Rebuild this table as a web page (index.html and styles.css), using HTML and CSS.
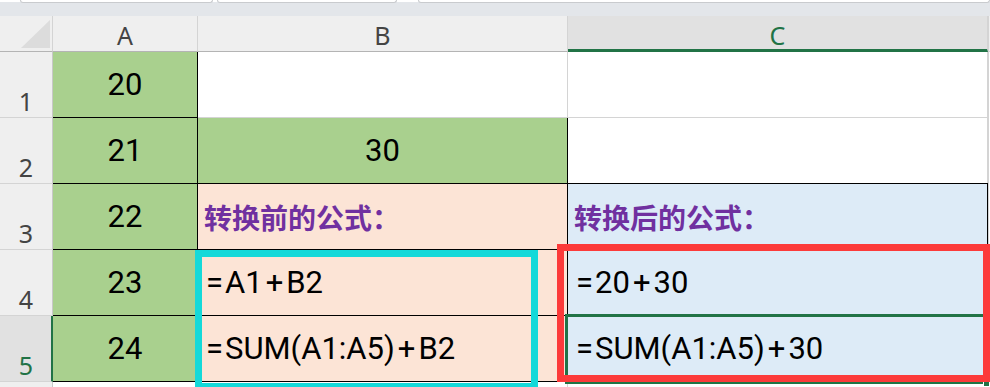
FILE: index.html
```html
<!DOCTYPE html>
<html lang="zh">
<head>
<meta charset="utf-8">
<title>Sheet</title>
<link rel="stylesheet" href="styles.css">
</head>
<body>
<div class="topbar">
  <div class="tab tab1"></div>
  <div class="tab tab2"></div>
  <div class="tab tab3"></div>
</div>
<div class="sheet">
  <div class="corner"><div class="tri"></div></div>
  <div class="colhead">A</div>
  <div class="colhead">B</div>
  <div class="colhead sel">C</div>
  <div class="edge head"></div>

  <div class="rowhead">1</div>
  <div class="cell green bl">20</div>
  <div class="cell white"></div>
  <div class="cell white"></div>
  <div class="edge"></div>

  <div class="rowhead">2</div>
  <div class="cell green bl">21</div>
  <div class="cell green bl">30</div>
  <div class="cell white"></div>
  <div class="edge"></div>

  <div class="rowhead">3</div>
  <div class="cell green bl">22</div>
  <div class="cell peach bl left title">转换前的公式：</div>
  <div class="cell blue bl left title">转换后的公式：</div>
  <div class="edge"></div>

  <div class="rowhead">4</div>
  <div class="cell green bl">23</div>
  <div class="cell peach bl left"><span class="eq">=</span>A1<span class="op">+</span>B2</div>
  <div class="cell blue bl left"><span class="eq">=</span>20<span class="op">+</span>30</div>
  <div class="edge"></div>

  <div class="rowhead selrow">5</div>
  <div class="cell green bl">24</div>
  <div class="cell peach bl left"><span class="eq">=</span>SUM(A1:A5)<span class="op">+</span>B2</div>
  <div class="cell blue bl left"><span class="eq">=</span>SUM(A1:A5)<span class="op">+</span>30</div>
  <div class="edge"></div>

  <div class="rowhead tail"></div>
  <div class="cell tailc"></div>
  <div class="cell tailc"></div>
  <div class="cell tailc"></div>
  <div class="edge"></div>

  <div class="selbox"></div>
  <div class="handle"></div>
  <div class="cyanbox"></div>
  <div class="redbox"></div>
</div>
</body>
</html>
```
FILE: styles.css
```css
* { box-sizing: border-box; }
html, body { margin: 0; padding: 0; }
body {
  width: 990px;
  height: 387px;
  overflow: hidden;
  background: #ffffff;
  font-family: Roboto, "Noto Sans CJK SC", sans-serif;
}
.topbar {
  height: 16px;
  background: #e3e6ea;
  position: relative;
  border-top: 2px solid #ffffff;
}
.tab {
  position: absolute;
  top: -2px;
  height: 3px;
  background: #ffffff;
  border: 1px solid #c9cbce;
  border-top: none;
  border-radius: 0 0 3px 3px;
}
.tab1 { left: 20px; width: 193px; }
.tab2 { left: 217px; width: 180px; }
.tab3 { left: 418px; width: 572px; }

.sheet {
  position: relative;
  display: grid;
  grid-template-columns: 53px 145px 370px 420px 2px;
  grid-template-rows: 36px 66px 66px 66px 66px 66px 5px;
}
.corner {
  background: #efefef;
  border-right: 1px solid #d4d4d4;
  border-bottom: 1px solid #b4b4b4;
  position: relative;
}
.tri {
  position: absolute;
  left: 21px;
  top: 4px;
  width: 29px;
  height: 28px;
  background: #dcdcdc;
  clip-path: polygon(100% 0, 100% 100%, 0 100%);
}
.colhead {
  background: #efefef;
  border-right: 1px solid #d4d4d4;
  border-bottom: 1px solid #b4b4b4;
  color: #444444;
  font-family: "Noto Sans", sans-serif;
  font-size: 25px;
  display: flex;
  align-items: center;
  justify-content: center;
  padding-top: 3px;
}
.colhead.sel {
  background: #e1e1e1;
  color: #217346;
  border-bottom: 3px solid #217346;
  padding-top: 5px;
}
.edge {
  background: #ffffff;
  border-left: 1px solid #d4d4d4;
}
.edge.head { background: #efefef; border-bottom: 1px solid #d4d4d4; }
.rowhead {
  background: #efefef;
  border-right: 1px solid #c8c8c8;
  border-bottom: 1px solid #d4d4d4;
  color: #444444;
  font-family: "Noto Sans", sans-serif;
  font-size: 25px;
  display: flex;
  align-items: flex-end;
  justify-content: center;
  padding-bottom: 1px;
  line-height: 30px;
}
.rowhead.selrow {
  background: #e1e1e1;
  color: #217346;
  border-right: 2px solid #217346;
  padding-left: 1px;
}
.rowhead.tail { border-bottom: none; }
.cell {
  border-right: 1px solid #d4d4d4;
  border-bottom: 1px solid #d4d4d4;
  font-size: 31px;
  color: #000000;
  display: flex;
  align-items: center;
  justify-content: center;
  white-space: nowrap;
}
.cell.bl { border-right-color: #000000; border-bottom-color: #000000; }
.green { background: #a9d08e; }
.white { background: #ffffff; }
.peach { background: #fce4d6; }
.blue { background: #ddebf7; }
.left { justify-content: flex-start; padding-left: 8px; }
.eq { margin-right: 2px; }
.op { margin: 0 3px; }
.title {
  color: #7030a0;
  font-family: "Noto Sans CJK SC", sans-serif;
  font-weight: bold;
  font-size: 28px;
  padding-left: 6px;
}
.tailc { border-bottom: none; background: #ffffff; }
.sheet > .blue.title { border-top: 1px solid #000000; margin-top: -1px; }

.selbox {
  position: absolute;
  left: 565px;
  top: 298px;
  width: 425px;
  height: 70px;
  border: 3px solid #217346;
}
.handle {
  position: absolute;
  left: 983px;
  top: 364px;
  width: 7px;
  height: 7px;
  background: #217346;
  border: 1px solid #ffffff;
}
.cyanbox {
  position: absolute;
  left: 195px;
  top: 234px;
  width: 343px;
  height: 140px;
  border: 7px solid #14d9d9;
}
.redbox {
  position: absolute;
  left: 557px;
  top: 228px;
  width: 433px;
  height: 138px;
  border: 7px solid #fc3a3a;
}
```
